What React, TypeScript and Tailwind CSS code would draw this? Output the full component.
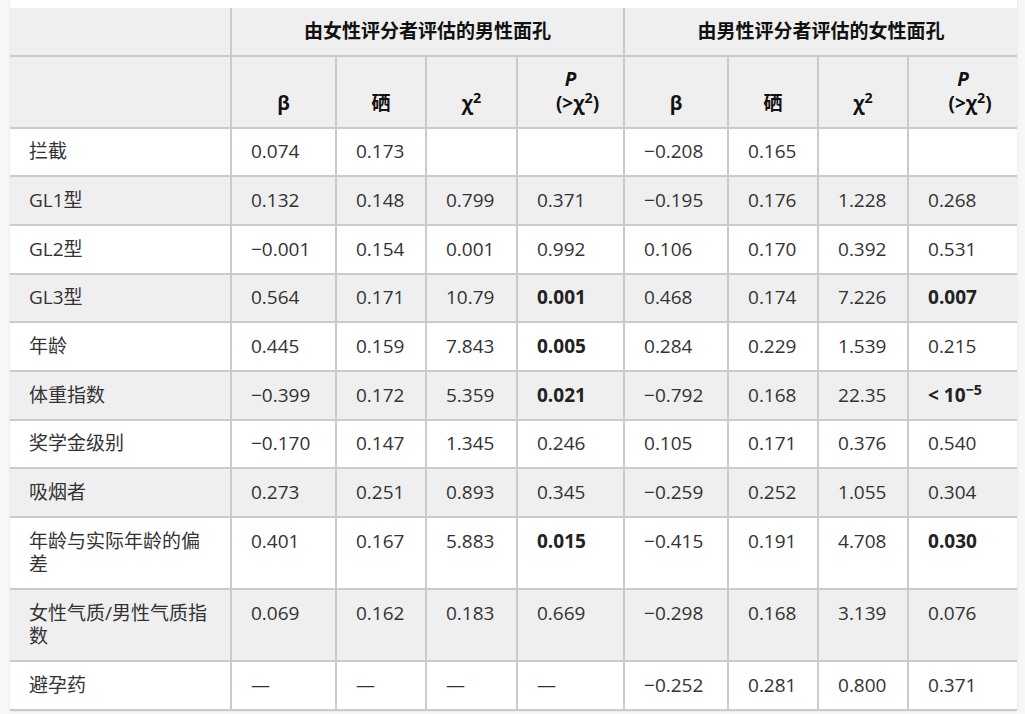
import React from 'react';

type Row = { label: string; values: string[] };

const rows: Row[] = [
  { label: '拦截', values: ['0.074', '0.173', '', '', '−0.208', '0.165', '', ''] },
  { label: 'GL1型', values: ['0.132', '0.148', '0.799', '0.371', '−0.195', '0.176', '1.228', '0.268'] },
  { label: 'GL2型', values: ['−0.001', '0.154', '0.001', '0.992', '0.106', '0.170', '0.392', '0.531'] },
  { label: 'GL3型', values: ['0.564', '0.171', '10.79', '*0.001', '0.468', '0.174', '7.226', '*0.007'] },
  { label: '年龄', values: ['0.445', '0.159', '7.843', '*0.005', '0.284', '0.229', '1.539', '0.215'] },
  { label: '体重指数', values: ['−0.399', '0.172', '5.359', '*0.021', '−0.792', '0.168', '22.35', 'tiny'] },
  { label: '奖学金级别', values: ['−0.170', '0.147', '1.345', '0.246', '0.105', '0.171', '0.376', '0.540'] },
  { label: '吸烟者', values: ['0.273', '0.251', '0.893', '0.345', '−0.259', '0.252', '1.055', '0.304'] },
  { label: '年龄与实际年龄的偏差', values: ['0.401', '0.167', '5.883', '*0.015', '−0.415', '0.191', '4.708', '*0.030'] },
  { label: '女性气质/男性气质指数', values: ['0.069', '0.162', '0.183', '0.669', '−0.298', '0.168', '3.139', '0.076'] },
  { label: '避孕药', values: ['—', '—', '—', '—', '−0.252', '0.281', '0.800', '0.371'] },
];

const widths = [221, 105, 90, 91, 107, 104, 90, 90, 109];

function Cell({ v }: { v: string }) {
  if (v === 'tiny') {
    return (
      <span className="font-bold text-[#222]">
        &lt; 10<sup>−5</sup>
      </span>
    );
  }
  if (v.startsWith('*')) return <span className="font-bold text-[#222]">{v.slice(1)}</span>;
  return <>{v}</>;
}

function Chi() {
  return (
    <>
      χ<sup>2</sup>
    </>
  );
}

function PHead() {
  return (
    <>
      <span className="italic">P</span>
      <br />
      <span className="ml-[14px]">
        (&gt;<Chi />)
      </span>
    </>
  );
}

export default function App() {
  const cellBase = 'px-[19px] py-[11.7px] border-b-2 border-[#cbcbcb] align-top text-left';
  const headBase = 'px-[19px] py-[11.7px] border-b-2 border-[#cbcbcb] font-bold text-[#111] text-center';

  return (
    <div
      className="min-h-[714px] bg-[#f7f7f7] text-[19px] leading-[23.3px] text-[#333]"
      style={{ fontFamily: '"Open Sans", "Noto Sans CJK SC", sans-serif' }}
    >
      <div className="ml-[10px] w-[1007px] bg-white pt-[8px] shadow-[0_0_2px_rgba(0,0,0,0.12)]">
        <table className="w-full table-fixed border-collapse">
          <colgroup>
            {widths.map((w, i) => (
              <col key={i} style={{ width: w }} />
            ))}
          </colgroup>
          <thead className="bg-[#efefef]">
            <tr>
              <th className={headBase}>&nbsp;</th>
              <th colSpan={4} className={`${headBase} border-l-2`}>由女性评分者评估的男性面孔</th>
              <th colSpan={4} className={`${headBase} border-l-2`}>由男性评分者评估的女性面孔</th>
            </tr>
            <tr>
              <th className={`${headBase} align-bottom`}>&nbsp;</th>
              <th className={`${headBase} border-l-2 align-bottom`}>β</th>
              <th className={`${headBase} border-l-2 align-bottom`}>硒</th>
              <th className={`${headBase} border-l-2 align-bottom`}>
                <Chi />
              </th>
              <th className={`${headBase} border-l-2 align-bottom`}>
                <PHead />
              </th>
              <th className={`${headBase} border-l-2 align-bottom`}>β</th>
              <th className={`${headBase} border-l-2 align-bottom`}>硒</th>
              <th className={`${headBase} border-l-2 align-bottom`}>
                <Chi />
              </th>
              <th className={`${headBase} border-l-2 align-bottom`}>
                <PHead />
              </th>
            </tr>
          </thead>
          <tbody>
            {rows.map((row, i) => (
              <tr key={row.label} className={i % 2 === 1 ? 'bg-[#efefef]' : 'bg-white'}>
                <td className={cellBase}>{row.label}</td>
                {row.values.map((v, j) => (
                  <td key={j} className={`${cellBase} border-l-2`}>
                    <Cell v={v} />
                  </td>
                ))}
              </tr>
            ))}
          </tbody>
        </table>
      </div>
    </div>
  );
}
